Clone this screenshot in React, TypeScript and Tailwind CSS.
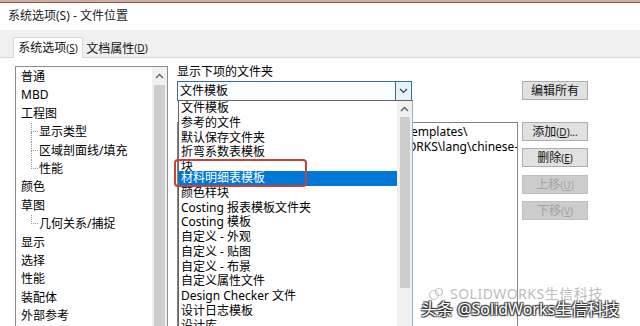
import React from "react";

const treeItems: { label: string; child?: boolean; last?: boolean }[] = [
  { label: "普通" },
  { label: "MBD" },
  { label: "工程图" },
  { label: "显示类型", child: true },
  { label: "区域剖面线/填充", child: true },
  { label: "性能", child: true, last: true },
  { label: "颜色" },
  { label: "草图" },
  { label: "几何关系/捕捉", child: true, last: true },
  { label: "显示" },
  { label: "选择" },
  { label: "性能" },
  { label: "装配体" },
  { label: "外部参考" },
];

const dropItems = [
  "文件模板",
  "参考的文件",
  "默认保存文件夹",
  "折弯系数表模板",
  "块",
  "材料明细表模板",
  "颜色样块",
  "Costing 报表模板文件夹",
  "Costing 模板",
  "自定义 - 外观",
  "自定义 - 贴图",
  "自定义 - 布景",
  "自定义属性文件",
  "Design Checker 文件",
  "设计日志模板",
  "设计库",
  "常用尺寸注解",
];

function UpArrow() {
  return (
    <svg width="9" height="6" viewBox="0 0 9 6">
      <path d="M1 5 L4.5 1.5 L8 5" fill="none" stroke="#606060" strokeWidth="1.4" />
    </svg>
  );
}

function Btn({ children, disabled }: { children: React.ReactNode; disabled?: boolean }) {
  return (
    <div
      className={
        disabled
          ? "h-[19px] w-[66px] flex items-center justify-center border border-[#bfbfbf] bg-[#cccccc] text-[#a3a3a3] text-[12px] leading-none"
          : "h-[19px] w-[66px] flex items-center justify-center border border-[#adadad] bg-[#e1e1e1] text-[#111] text-[12px] leading-none"
      }
    >
      {children}
    </div>
  );
}

export default function App() {
  return (
    <div className="relative w-[640px] h-[326px] overflow-hidden bg-white text-black font-['Noto_Sans','Noto_Sans_CJK_SC',sans-serif]">
      {/* top strip */}
      <div className="h-[3px] bg-[#cfae9f] border-b border-[#8a5a48]" />
      {/* title */}
      <div className="h-[27px] pl-[8px] pt-[5px] text-[12px] leading-[16px] text-[#222]">
        系统选项(S) - 文件位置
      </div>
      {/* tab band */}
      <div className="h-[28px] bg-[#f0f0f0] border-b border-[#d9d9d9] flex items-end pl-[13px]">
        <div className="h-[21px] w-[70px] -mb-px bg-white border border-b-0 border-[#d9d9d9] flex items-center justify-center text-[12px] text-[#111]">
          系统选项<span className="text-[10px]">(<span className="underline">S</span>)</span>
        </div>
        <div className="h-[17px] w-[68px] flex items-center justify-center text-[12px] text-[#111]">
          文档属性<span className="text-[10px]">(<span className="underline">D</span>)</span>
        </div>
      </div>

      {/* content */}
      <div className="flex pl-[15px] pt-[8px]">
        {/* tree */}
        <div className="w-[153px] h-[270px] border border-[#8c8c8c] flex">
          <div className="flex-1 flex flex-col pl-[5px] pt-[1px]">
            {treeItems.map((it, i) =>
              it.child ? (
                <div key={i} className="h-[18.4px] shrink-0 flex items-stretch">
                  <div className="relative w-[7px] ml-[10px]">
                    <div className="absolute left-0 top-0 h-1/2 w-full border-l border-b border-dotted border-[#9a9a9a]" />
                    {!it.last && (
                      <div className="absolute left-0 top-1/2 bottom-0 border-l border-dotted border-[#9a9a9a]" />
                    )}
                  </div>
                  <span className="ml-[1px] text-[12px] leading-[18.4px] whitespace-nowrap">{it.label}</span>
                </div>
              ) : (
                <div key={i} className="h-[18.4px] shrink-0 text-[12px] leading-[18.4px] whitespace-nowrap">
                  {it.label}
                </div>
              )
            )}
          </div>
          <div className="w-[15px] bg-[#f0f0f0] flex flex-col items-center">
            <div className="h-[18px] flex items-center justify-center">
              <UpArrow />
            </div>
            <div className="w-[11px] flex-1 bg-[#cdcdcd]" />
          </div>
        </div>

        {/* right area */}
        <div className="ml-[9px] flex gap-[4px]">
          <div className="w-[341px] flex flex-col">
            <div className="h-[16px] text-[12px] leading-[16px] -mt-[2px]">显示下项的文件夹</div>
            <div className="mt-[1px] w-[235px] h-[20px] border border-[#3a6f86] bg-[#fbfeff] flex">
              <div className="flex-1 pl-[2px] text-[12px] leading-[18px]">文件模板</div>
              <div className="w-[16px] border-l border-[#3a6f86] bg-[#e5f1fb] flex items-center justify-center">
                <svg width="9" height="6" viewBox="0 0 9 6">
                  <path d="M1 1 L4.5 4.5 L8 1" fill="none" stroke="#404040" strokeWidth="1.2" />
                </svg>
              </div>
            </div>
            <div className="mt-[21px] w-[341px] h-[220px] border border-[#828282] overflow-hidden text-[12px] leading-[15px] pt-[1px]">
              <div className="flex whitespace-nowrap">
                <span className="w-[233px] shrink-0 overflow-hidden text-right">C:\ProgramData\SOLIDWORKS\SOLIDWORKS 2018\t</span>
                <span>emplates\</span>
              </div>
              <div className="flex whitespace-nowrap">
                <span className="w-[229px] shrink-0 overflow-hidden text-right">C:\Program Files\SOLIDWORKS Corp\SOLIDW</span>
                <span>ORKS\lang\chinese-simplified\</span>
              </div>
            </div>
          </div>
          <div className="flex flex-col">
            <div className="mt-[15px]">
              <Btn>编辑所有</Btn>
            </div>
            <div className="mt-[22px]">
              <Btn>
                添加<span className="text-[10px]">(<span className="underline">D</span>)...</span>
              </Btn>
            </div>
            <div className="mt-[7px]">
              <Btn>
                删除<span className="text-[10px]">(<span className="underline">E</span>)</span>
              </Btn>
            </div>
            <div className="mt-[8px]">
              <Btn disabled>
                上移<span className="text-[10px]">(<span className="underline">U</span>)</span>
              </Btn>
            </div>
            <div className="mt-[7px]">
              <Btn disabled>
                下移<span className="text-[10px]">(<span className="underline">V</span>)</span>
              </Btn>
            </div>
          </div>
        </div>
      </div>

      {/* dropdown list overlay */}
      <div className="absolute left-[178px] top-[100px] w-[235px] h-[232px] bg-white border border-[#646464] border-r-[#8fb4cc] flex">
        <div className="flex-1 flex flex-col overflow-hidden">
          {dropItems.map((d, i) => (
            <div
              key={i}
              className={
                i === 5
                  ? "h-[14.75px] shrink-0 pl-[2px] text-[12px] leading-[14.75px] whitespace-nowrap bg-[#0078d7] text-white"
                  : i === 4
                  ? "h-[11px] shrink-0 pl-[2px] text-[12px] leading-[14.75px] whitespace-nowrap overflow-hidden"
                  : "h-[14.75px] shrink-0 pl-[2px] text-[12px] leading-[14.75px] whitespace-nowrap"
              }
            >
              {d}
            </div>
          ))}
        </div>
        <div className="w-[15px] bg-[#f0f0f0] flex flex-col items-center">
          <div className="h-[16px] flex items-center justify-center">
            <UpArrow />
          </div>
          <div className="w-[10px] h-[171px] bg-[#cdcdcd]" />
        </div>
      </div>

      {/* red highlight box */}
      <div className="absolute left-[174px] top-[159px] w-[133px] h-[28px] border-2 border-[#c8423a] rounded-[4px]" />

      {/* watermark */}
      <div className="absolute left-[428px] top-[286px] flex items-center gap-[6px] text-[#bdbdbd] text-[14px] leading-[16px] [text-shadow:0_0_1px_#ffffff]">
        <svg width="16" height="14" viewBox="0 0 16 14">
          <circle cx="6" cy="8" r="4.5" fill="none" stroke="#c8c8c8" strokeWidth="1.2" />
          <circle cx="11" cy="5" r="3.5" fill="none" stroke="#c8c8c8" strokeWidth="1.2" />
        </svg>
        <span className="tracking-[0.5px]">SOLIDWORKS生信科技</span>
      </div>
      <div className="absolute left-[421px] top-[300px] text-white text-[16px] leading-[18px] whitespace-nowrap [text-shadow:1px_1px_1px_#333,-1px_-1px_1px_#333,1px_-1px_1px_#333,-1px_1px_1px_#333]">
        头条 @SolidWorks生信科技
      </div>
    </div>
  );
}
